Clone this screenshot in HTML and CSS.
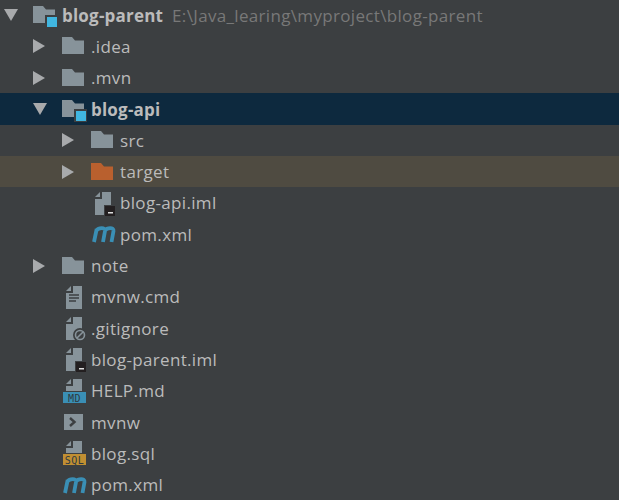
FILE: index.html
```html
<!DOCTYPE html>
<html lang="en">
<head>
    <meta charset="UTF-8">
    <meta name="viewport" content="width=device-width, initial-scale=1.0">
    <title>Project tree</title>
    <link rel="stylesheet" href="styles.css">
</head>
<body>
    <svg class="defs" width="0" height="0">
        <defs>
            <symbol id="arrow-down" viewBox="0 0 16 16"><path d="M1 2H15L8 14Z" fill="#a8aaac"/></symbol>
            <symbol id="arrow-right" viewBox="0 0 16 16"><path d="M1 1V15L13 8Z" fill="#a8aaac"/></symbol>
            <symbol id="folder" viewBox="0 0 28 28"><path d="M0 5H10L13 8.5H22V22H0Z" fill="#87939a"/></symbol>
            <symbol id="folder-orange" viewBox="0 0 28 28"><path d="M0 5H10L13 8.5H22V22H0Z" fill="#b9602e"/></symbol>
            <symbol id="module" viewBox="0 0 28 28">
                <path d="M0 5H10L13 8.5H22V22H0Z" fill="#87939a"/>
                <rect x="12" y="14" width="13" height="13" fill="#3c3f41"/>
                <rect x="14" y="16" width="10" height="10" fill="#40b6e0"/>
            </symbol>
            <symbol id="file-base" viewBox="0 0 28 28">
                <path d="M11 3H20V26H4V10H11Z" fill="#87939a"/>
                <path d="M9 3V8H4Z" fill="#87939a"/>
            </symbol>
            <symbol id="file-iml" viewBox="0 0 28 28">
                <use href="#file-base"/>
                <rect x="13" y="16" width="12" height="12" fill="#3c3f41"/>
                <rect x="14" y="17" width="10" height="10" fill="#231f20"/>
                <rect x="17" y="23" width="5" height="1.5" fill="#ddd"/>
            </symbol>
            <symbol id="file-text" viewBox="0 0 28 28">
                <use href="#file-base"/>
                <path d="M7 12H17M7 15H17M7 18H14" stroke="#3c3f41" stroke-width="1.4"/>
            </symbol>
            <symbol id="file-ignore" viewBox="0 0 28 28">
                <use href="#file-base"/>
                <circle cx="18" cy="21" r="7" fill="#3c3f41"/>
                <circle cx="18" cy="21" r="4.5" fill="none" stroke="#87939a" stroke-width="1.6"/>
                <path d="M15 24L21 18" stroke="#87939a" stroke-width="1.6"/>
            </symbol>
            <symbol id="file-short" viewBox="0 0 28 28">
                <path d="M11 2H20V14H4V9H11Z" fill="#87939a"/>
                <path d="M9 2V7H4Z" fill="#87939a"/>
            </symbol>
            <symbol id="shell" viewBox="0 0 28 28">
                <rect x="2" y="6" width="19" height="16" fill="#87939a"/>
                <path d="M8 10L12.5 14L8 18" fill="none" stroke="#3c3f41" stroke-width="2.4"/>
            </symbol>
            <symbol id="maven" viewBox="0 0 28 28">
                <path d="M3 22L5.7 9M5.5 10.5C7.5 7.5 14.5 7 14 11L12 22M14 10.5C16 7.5 23 7 22.5 11L20.5 22" fill="none" stroke="#3a8fb5" stroke-width="3.8"/>
            </symbol>
        </defs>
    </svg>

    <ul class="tree">
        <li class="row depth-0"><svg class="arrow"><use href="#arrow-down"/></svg><svg class="icon"><use href="#module"/></svg><b class="name">blog-parent</b><span class="path">E:\Java_learing\myproject\blog-parent</span></li>
        <li class="row depth-1"><svg class="arrow"><use href="#arrow-right"/></svg><svg class="icon"><use href="#folder"/></svg><span class="name">.idea</span></li>
        <li class="row depth-1"><svg class="arrow"><use href="#arrow-right"/></svg><svg class="icon"><use href="#folder"/></svg><span class="name">.mvn</span></li>
        <li class="row depth-1 selected"><svg class="arrow"><use href="#arrow-down"/></svg><svg class="icon"><use href="#module"/></svg><b class="name">blog-api</b></li>
        <li class="row depth-2"><svg class="arrow"><use href="#arrow-right"/></svg><svg class="icon"><use href="#folder"/></svg><span class="name">src</span></li>
        <li class="row depth-2 excluded"><svg class="arrow"><use href="#arrow-right"/></svg><svg class="icon"><use href="#folder-orange"/></svg><span class="name">target</span></li>
        <li class="row depth-2"><span class="arrow"></span><svg class="icon"><use href="#file-iml"/></svg><span class="name">blog-api.iml</span></li>
        <li class="row depth-2"><span class="arrow"></span><svg class="icon"><use href="#maven"/></svg><span class="name">pom.xml</span></li>
        <li class="row depth-1"><svg class="arrow"><use href="#arrow-right"/></svg><svg class="icon"><use href="#folder"/></svg><span class="name">note</span></li>
        <li class="row depth-1"><span class="arrow"></span><svg class="icon"><use href="#file-text"/></svg><span class="name">mvnw.cmd</span></li>
        <li class="row depth-1"><span class="arrow"></span><svg class="icon"><use href="#file-ignore"/></svg><span class="name">.gitignore</span></li>
        <li class="row depth-1"><span class="arrow"></span><svg class="icon"><use href="#file-iml"/></svg><span class="name">blog-parent.iml</span></li>
        <li class="row depth-1"><span class="arrow"></span><svg class="icon" viewBox="0 0 28 28"><use href="#file-short" width="28" height="28"/><rect x="1" y="15" width="23" height="11" fill="#3a8fb5"/><text x="12.5" y="24.5" class="tag">MD</text></svg><span class="name">HELP.md</span></li>
        <li class="row depth-1"><span class="arrow"></span><svg class="icon"><use href="#shell"/></svg><span class="name">mvnw</span></li>
        <li class="row depth-1"><span class="arrow"></span><svg class="icon" viewBox="0 0 28 28"><use href="#file-short" width="28" height="28"/><rect x="1" y="15" width="23" height="11" fill="#c18f32"/><text x="12.5" y="24.5" class="tag">SQL</text></svg><span class="name">blog.sql</span></li>
        <li class="row depth-1"><span class="arrow"></span><svg class="icon"><use href="#maven"/></svg><span class="name">pom.xml</span></li>
    </ul>
</body>
</html>
```

FILE: styles.css
```css
html, body {
    margin: 0;
    height: 100%;
    overflow: hidden;
    background-color: #3c3f41;
}
.defs {
    display: block;
    height: 0;
}
.tree {
    list-style: none;
    margin: -0.5px 0 0;
    padding: 0;
    font-family: "Open Sans", sans-serif;
    font-size: 17px;
    letter-spacing: 0.33px;
    color: #bbbbbb;
}
.tree b {
    letter-spacing: 0.2px;
}
.row {
    display: flex;
    align-items: center;
    height: 31.3px;
    white-space: nowrap;
}
.depth-0 {
    padding-left: 3px;
}
.depth-1 {
    padding-left: 32px;
}
.depth-2 {
    padding-left: 61px;
}
.selected {
    background-color: #0d293e;
}
.excluded {
    background-color: #4f4b41;
}
.arrow {
    flex: none;
    width: 16px;
    height: 16px;
    margin-right: 14px;
}
.icon {
    flex: none;
    width: 28px;
    height: 28px;
    margin-right: 1px;
}
.name {
    margin-right: 9px;
}
.path {
    color: #787878;
}
.tag {
    font-family: "DejaVu Sans Mono", monospace;
    font-size: 10px;
    letter-spacing: 0.5px;
    fill: #2f3a42;
    text-anchor: middle;
}
```
